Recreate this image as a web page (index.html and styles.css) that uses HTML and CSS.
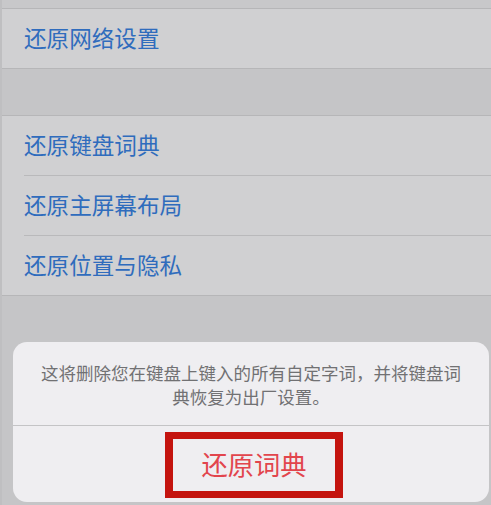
FILE: index.html
```html
<!DOCTYPE html>
<html lang="zh-CN">
<head>
<meta charset="utf-8">
<title>还原</title>
<link rel="stylesheet" href="styles.css">
</head>
<body>
<div class="screen">
  <div class="top-band"></div>
  <div class="group">
    <div class="row"><span class="label">还原网络设置</span></div>
  </div>
  <div class="gap"></div>
  <div class="group">
    <div class="row"><span class="label">还原键盘词典</span></div>
    <div class="row"><span class="label">还原主屏幕布局</span></div>
    <div class="row"><span class="label">还原位置与隐私</span></div>
  </div>
  <div class="rest"></div>

  <div class="sheet">
    <p class="message">这将删除您在键盘上键入的所有自定字词，并将键盘词典恢复为出厂设置。</p>
    <div class="action">
      <span class="action-label">还原词典</span>
    </div>
  </div>
</div>
</body>
</html>
```

FILE: styles.css
```css
html, body {
  margin: 0;
  padding: 0;
}

body {
  width: 491px;
  height: 505px;
  overflow: hidden;
  font-family: "Noto Sans CJK SC", "Noto Sans", sans-serif;
  background: #c6c6c8;
}

.screen {
  position: relative;
  width: 491px;
  height: 505px;
  display: flex;
  flex-direction: column;
  background: #c6c6c8;
  box-sizing: border-box;
  border-left: 2px solid #bfbfc1;
  box-shadow: inset 1px 0 0 #ececee;
}

.top-band {
  height: 8px;
  background: #c8c8ca;
  border-bottom: 1px solid #b6b6b8;
}

.group {
  background: #d0d0d2;
  border-bottom: 1px solid #b6b6b8;
}

.row {
  height: 59px;
  display: flex;
  align-items: center;
  padding-left: 22px;
  position: relative;
}

.group .row + .row {
  border-top: 1px solid #b9b9bb;
  margin-left: 22px;
  padding-left: 0;
}

.label {
  font-size: 22.6px;
  line-height: 1;
  color: #2f6cbd;
  letter-spacing: 0;
}

.gap {
  height: 46px;
  background: #c5c5c7;
  border-bottom: 1px solid #b6b6b8;
}

.rest {
  flex: 1;
  background: #c5c5c7;
}

.sheet {
  position: absolute;
  left: 11px;
  top: 342px;
  width: 476px;
  height: 160px;
  border-radius: 14px;
  background: #efeef1;
  display: flex;
  flex-direction: column;
  overflow: hidden;
}

.message {
  margin: 0;
  padding: 19px 22px 16px;
  font-size: 17.5px;
  line-height: 24px;
  color: #717173;
  text-align: center;
  border-bottom: 1px solid #c4c4c6;
}

.action {
  flex: 1;
  display: flex;
  justify-content: center;
  align-items: flex-start;
  padding-top: 6px;
}

.action-label {
  display: inline-block;
  margin-left: 6px;
  border: 7px solid #c4140f;
  border-left-width: 8px;
  border-right-width: 8px;
  padding: 0 28px;
  height: 52px;
  line-height: 50px;
  font-size: 26.3px;
  color: #e2454d;
}
```
